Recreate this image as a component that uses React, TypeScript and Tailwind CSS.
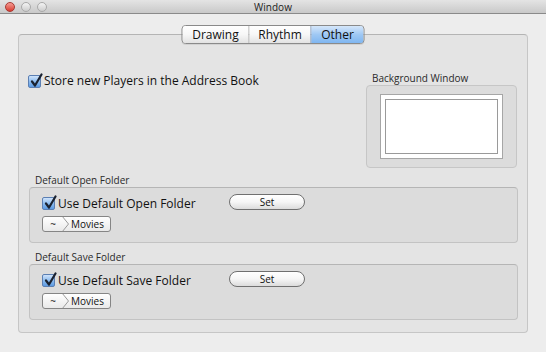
import React from "react";

const font = { fontFamily: '"Open Sans", "DejaVu Sans", sans-serif' };

function Check() {
  return (
    <span className="relative block h-[13px] w-[13px] shrink-0 rounded-[2px] border border-[#5b7fb3] bg-gradient-to-b from-[#cfe3fa] via-[#8dbcef] to-[#5d9be2]">
      <svg className="absolute -top-[3px] left-[1px]" width="14" height="15" viewBox="0 0 14 15">
        <path d="M2 8.5 L5 12.5 L11.5 1.5" fill="none" stroke="#1a2230" strokeWidth="2.2" strokeLinecap="round" strokeLinejoin="round" />
      </svg>
    </span>
  );
}

function SetButton() {
  return (
    <div className="flex h-[16px] w-[76px] items-center justify-center rounded-full border border-[#707070] bg-gradient-to-b from-white via-[#f6f6f6] to-[#dcdcdc] text-[10px] leading-none text-[#111]">
      Set
    </div>
  );
}

function PathControl() {
  return (
    <div className="relative flex h-[16px] w-[69px] items-center overflow-hidden rounded-[3px] border border-[#858585] bg-gradient-to-b from-white to-[#e9e9e9] text-[10px] leading-none text-[#111]">
      <span className="w-[20px] text-center">~</span>
      <svg className="absolute left-[19px] top-0" width="8" height="16" viewBox="0 0 8 16">
        <polyline points="0,-1 6.5,7 0,15" fill="none" stroke="#9a9a9a" strokeWidth="1" />
      </svg>
      <span className="ml-[8px]">Movies</span>
    </div>
  );
}

function FolderGroup({ title, label }: { title: string; label: string }) {
  return (
    <div className="w-[489px]">
      <div className="pl-[6px] text-[10px] leading-[13px] text-[#2a2a2a]">{title}</div>
      <div className="h-[56px] rounded-[4px] border border-[#c3c3c3] border-t-[#b5b5b5] bg-[#dcdcdc] pl-[12px] pt-[6px]">
        <div className="flex h-[16px] items-start">
          <div className="flex w-[187px] items-start">
            <div className="mt-[3px]">
              <Check />
            </div>
            <span className="ml-[3px] mt-[2px] text-[12px] leading-[16px] text-[#111]">{label}</span>
          </div>
          <SetButton />
        </div>
        <div className="mt-[6px]">
          <PathControl />
        </div>
      </div>
    </div>
  );
}

export default function App() {
  return (
    <div className="h-[352px] w-[546px] overflow-hidden bg-[#ededed]" style={font}>
      <div className="relative flex h-[14px] items-center justify-center border-b border-[#8a8a8a] bg-gradient-to-b from-[#e4e4e4] to-[#c9c9c9]">
        <div className="absolute left-[5px] top-[2px] flex gap-[6px]">
          <span className="h-[10px] w-[10px] rounded-full border border-[#a83a33] bg-gradient-to-b from-[#f59a93] to-[#d8392f]" />
          <span className="h-[10px] w-[10px] rounded-full border border-[#a9a9a9] bg-gradient-to-b from-[#f4f4f4] to-[#cdcdcd]" />
          <span className="h-[10px] w-[10px] rounded-full border border-[#a9a9a9] bg-gradient-to-b from-[#f4f4f4] to-[#cdcdcd]" />
        </div>
        <span className="text-[10px] leading-none text-[#222]">Window</span>
      </div>

      <div className="relative ml-[18px] mt-[20px] h-[299px] w-[510px] rounded-[4px] border border-[#c6c6c6] border-t-[#b4b4b4] bg-[#e4e4e4] px-[10px]">
        <div className="absolute -top-[10px] left-1/2 flex h-[19px] -translate-x-1/2 overflow-hidden rounded-[4px] border border-[#8a8a8a] text-[12px] leading-none text-[#111] shadow-[0_1px_0_rgba(0,0,0,0.08)]">
          <div className="flex w-[67px] items-center justify-center border-r border-[#b0b0b0] bg-gradient-to-b from-white via-[#f7f7f7] to-[#e2e2e2]">Drawing</div>
          <div className="flex w-[62px] items-center justify-center border-r border-[#7d93b5] bg-gradient-to-b from-white via-[#f7f7f7] to-[#e2e2e2]">Rhythm</div>
          <div className="flex w-[52px] items-center justify-center bg-gradient-to-b from-[#d6e7fa] via-[#9fc8f4] to-[#7fb6f0]">Other</div>
        </div>

        <div className="mt-[37px] flex items-start justify-between">
          <div className="-ml-[1px] mt-[1px] flex h-[16px] items-center">
            <Check />
            <span className="ml-[3px] text-[12px] leading-[16px] text-[#111]">Store new Players in the Address Book</span>
          </div>
          <div>
            <div className="pl-[6px] text-[10px] leading-[13px] text-[#2a2a2a]">Background Window</div>
            <div className="flex h-[83px] w-[151px] items-center justify-center rounded-[4px] border border-[#c6c6c6] bg-[#dcdcdc]">
              <div className="h-[65px] w-[123px] border border-[#a6a6a6] bg-white p-[4px]">
                <div className="h-full w-full border border-[#9a9a9a] bg-white" />
              </div>
            </div>
          </div>
        </div>

        <div className="mt-[6px]">
          <FolderGroup title="Default Open Folder" label="Use Default Open Folder" />
        </div>
        <div className="mt-[8px]">
          <FolderGroup title="Default Save Folder" label="Use Default Save Folder" />
        </div>
      </div>
    </div>
  );
}
